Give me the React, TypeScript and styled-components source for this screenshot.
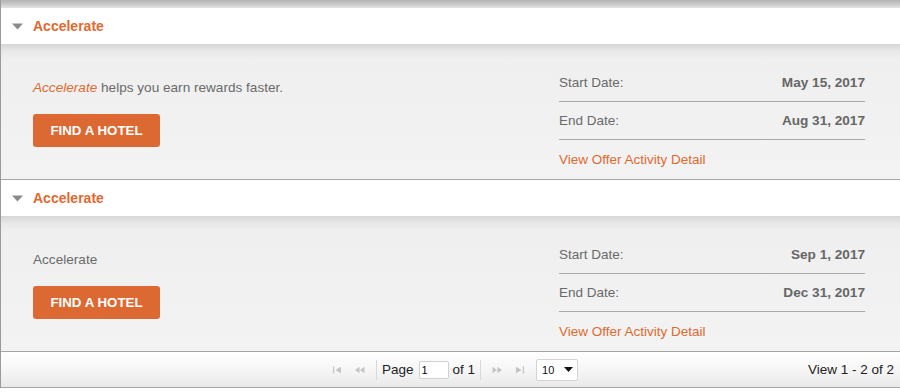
import React from 'react';
import styled, { createGlobalStyle } from 'styled-components';

const Orange = '#df6a30';
const Text = '#6a6a6a';

const GlobalStyle = createGlobalStyle`
  body {
    margin: 0;
    background: #fff;
    font-family: "Liberation Sans", Arial, sans-serif;
  }
`;

const Frame = styled.div`
  width: 900px;
  border-left: 1px solid #9a9a9a;
  box-sizing: border-box;
`;

const TopStrip = styled.div`
  height: 8px;
  background: linear-gradient(to bottom, #b4b4b4, #c8c8c8 50%, #e4e4e4);
`;

const Header = styled.div`
  height: 36px;
  background: #fff;
  display: flex;
  align-items: center;
  padding-left: 11px;
  gap: 10px;
`;

const Title = styled.span`
  color: ${Orange};
  font-size: 14px;
  font-weight: bold;
`;

const Body = styled.div`
  height: 135px;
  border-bottom: 1px solid #a6a6a6;
  background: linear-gradient(to bottom, #d6d6d6 0, #e8e8e8 7px, #efefef 15px, #f3f3f3 100%);
  display: flex;
  justify-content: space-between;
  padding: 0 35px 0 32px;
`;

const Left = styled.div`
  display: flex;
  flex-direction: column;
  align-items: flex-start;
  padding-top: 35px;
`;

const Blurb = styled.div`
  font-size: 13.6px;
  color: ${Text};
  height: 17px;
  line-height: 17px;

  em {
    color: ${Orange};
  }
`;

const HotelButton = styled.button`
  margin-top: 18px;
  width: 127px;
  height: 33px;
  border: none;
  border-radius: 3px;
  background: #dc6932;
  color: #fff;
  font-family: inherit;
  font-size: 13.3px;
  font-weight: bold;
`;

const Dates = styled.div`
  width: 306px;
  padding-top: 20px;
`;

const DateRow = styled.div`
  height: 37px;
  border-bottom: 1px solid #a9a9a9;
  display: flex;
  align-items: center;
  justify-content: space-between;
  font-size: 13.5px;
  color: ${Text};

  b {
    font-size: 13.6px;
    color: #666;
  }
`;

const DetailLink = styled.a`
  display: flex;
  align-items: center;
  height: 38px;
  font-size: 13.5px;
  color: ${Orange};
  text-decoration: none;
`;

const Pager = styled.div`
  height: 35px;
  border-bottom: 1px solid #a6a6a6;
  background: linear-gradient(to bottom, #ffffff, #f6f6f6 50%, #e9e9e9);
  display: grid;
  grid-template-columns: 1fr auto 1fr;
  align-items: center;
  font-size: 13.5px;
  color: #222;
`;

const Controls = styled.div`
  grid-column: 2;
  display: flex;
  align-items: center;
  height: 100%;
  margin-left: 4px;
`;

const Nav = styled.span`
  display: flex;
  align-items: center;
  width: 22px;
  justify-content: center;
`;

const Sep = styled.span`
  width: 1px;
  height: 20px;
  background: #d8d8d8;
  margin: 0 5px;
`;

const PageInput = styled.input`
  width: 30px;
  height: 18px;
  box-sizing: border-box;
  margin: 0 4px 0 5px;
  padding: 0 2px;
  border: 1px solid #d0d0d0;
  border-radius: 2px;
  font-family: inherit;
  font-size: 11px;
`;

const SizeSelect = styled.div`
  margin-left: 6px;
  width: 42px;
  height: 22px;
  box-sizing: border-box;
  border: 1px solid #d4d4d4;
  border-radius: 2px;
  background: #fff;
  display: flex;
  align-items: center;
  justify-content: space-between;
  padding: 0 4px 0 5px;
  font-size: 11px;
  color: #111;
`;

const ViewInfo = styled.div`
  justify-self: end;
  padding-right: 6px;
`;

const Caret = () => (
  <svg width="11" height="7" viewBox="0 0 11 7">
    <path d="M0 0.5h11L5.5 6.5z" fill="#8a8a8a" />
  </svg>
);

const NavIcon = ({ kind }: { kind: 'first' | 'prev' | 'next' | 'last' }) => {
  const c = '#c4c4c4';
  const flip = kind === 'next' || kind === 'last' ? 'scale(-1,1) translate(-12,0)' : undefined;
  return (
    <svg width="12" height="8" viewBox="0 0 12 8">
      <g transform={flip}>
        {kind === 'first' || kind === 'last' ? (
          <>
            <rect x="1" y="0.5" width="1.2" height="7" fill={c} />
            <path d="M3.5 4L9 0.8v6.4z" fill={c} />
          </>
        ) : (
          <>
            <path d="M1 4L5.5 0.8v6.4z" fill={c} />
            <path d="M6 4L10.5 0.8v6.4z" fill={c} />
          </>
        )}
      </g>
    </svg>
  );
};

type Offer = {
  blurb: React.ReactNode;
  start: string;
  end: string;
};

const offers: Offer[] = [
  {
    blurb: (
      <>
        <em>Accelerate</em> helps you earn rewards faster.
      </>
    ),
    start: 'May 15, 2017',
    end: 'Aug 31, 2017',
  },
  { blurb: 'Accelerate', start: 'Sep 1, 2017', end: 'Dec 31, 2017' },
];

const OfferSection = ({ offer }: { offer: Offer }) => (
  <section>
    <Header>
      <Caret />
      <Title>Accelerate</Title>
    </Header>
    <Body>
      <Left>
        <Blurb>{offer.blurb}</Blurb>
        <HotelButton>FIND A HOTEL</HotelButton>
      </Left>
      <Dates>
        <DateRow>
          <span>Start Date:</span>
          <b>{offer.start}</b>
        </DateRow>
        <DateRow>
          <span>End Date:</span>
          <b>{offer.end}</b>
        </DateRow>
        <DetailLink href="#">View Offer Activity Detail</DetailLink>
      </Dates>
    </Body>
  </section>
);

export default function App() {
  return (
    <>
      <GlobalStyle />
      <Frame>
        <TopStrip />
        {offers.map((o, i) => (
          <OfferSection key={i} offer={o} />
        ))}
        <Pager>
          <Controls>
            <Nav><NavIcon kind="first" /></Nav>
            <Nav><NavIcon kind="prev" /></Nav>
            <Sep />
            <span>Page</span>
            <PageInput defaultValue="1" />
            <span>of 1</span>
            <Sep />
            <Nav><NavIcon kind="next" /></Nav>
            <Nav><NavIcon kind="last" /></Nav>
            <SizeSelect>
              <span>10</span>
              <svg width="9" height="5" viewBox="0 0 9 5">
                <path d="M0 0h9L4.5 5z" fill="#111" />
              </svg>
            </SizeSelect>
          </Controls>
          <ViewInfo>View 1 - 2 of 2</ViewInfo>
        </Pager>
      </Frame>
    </>
  );
}
